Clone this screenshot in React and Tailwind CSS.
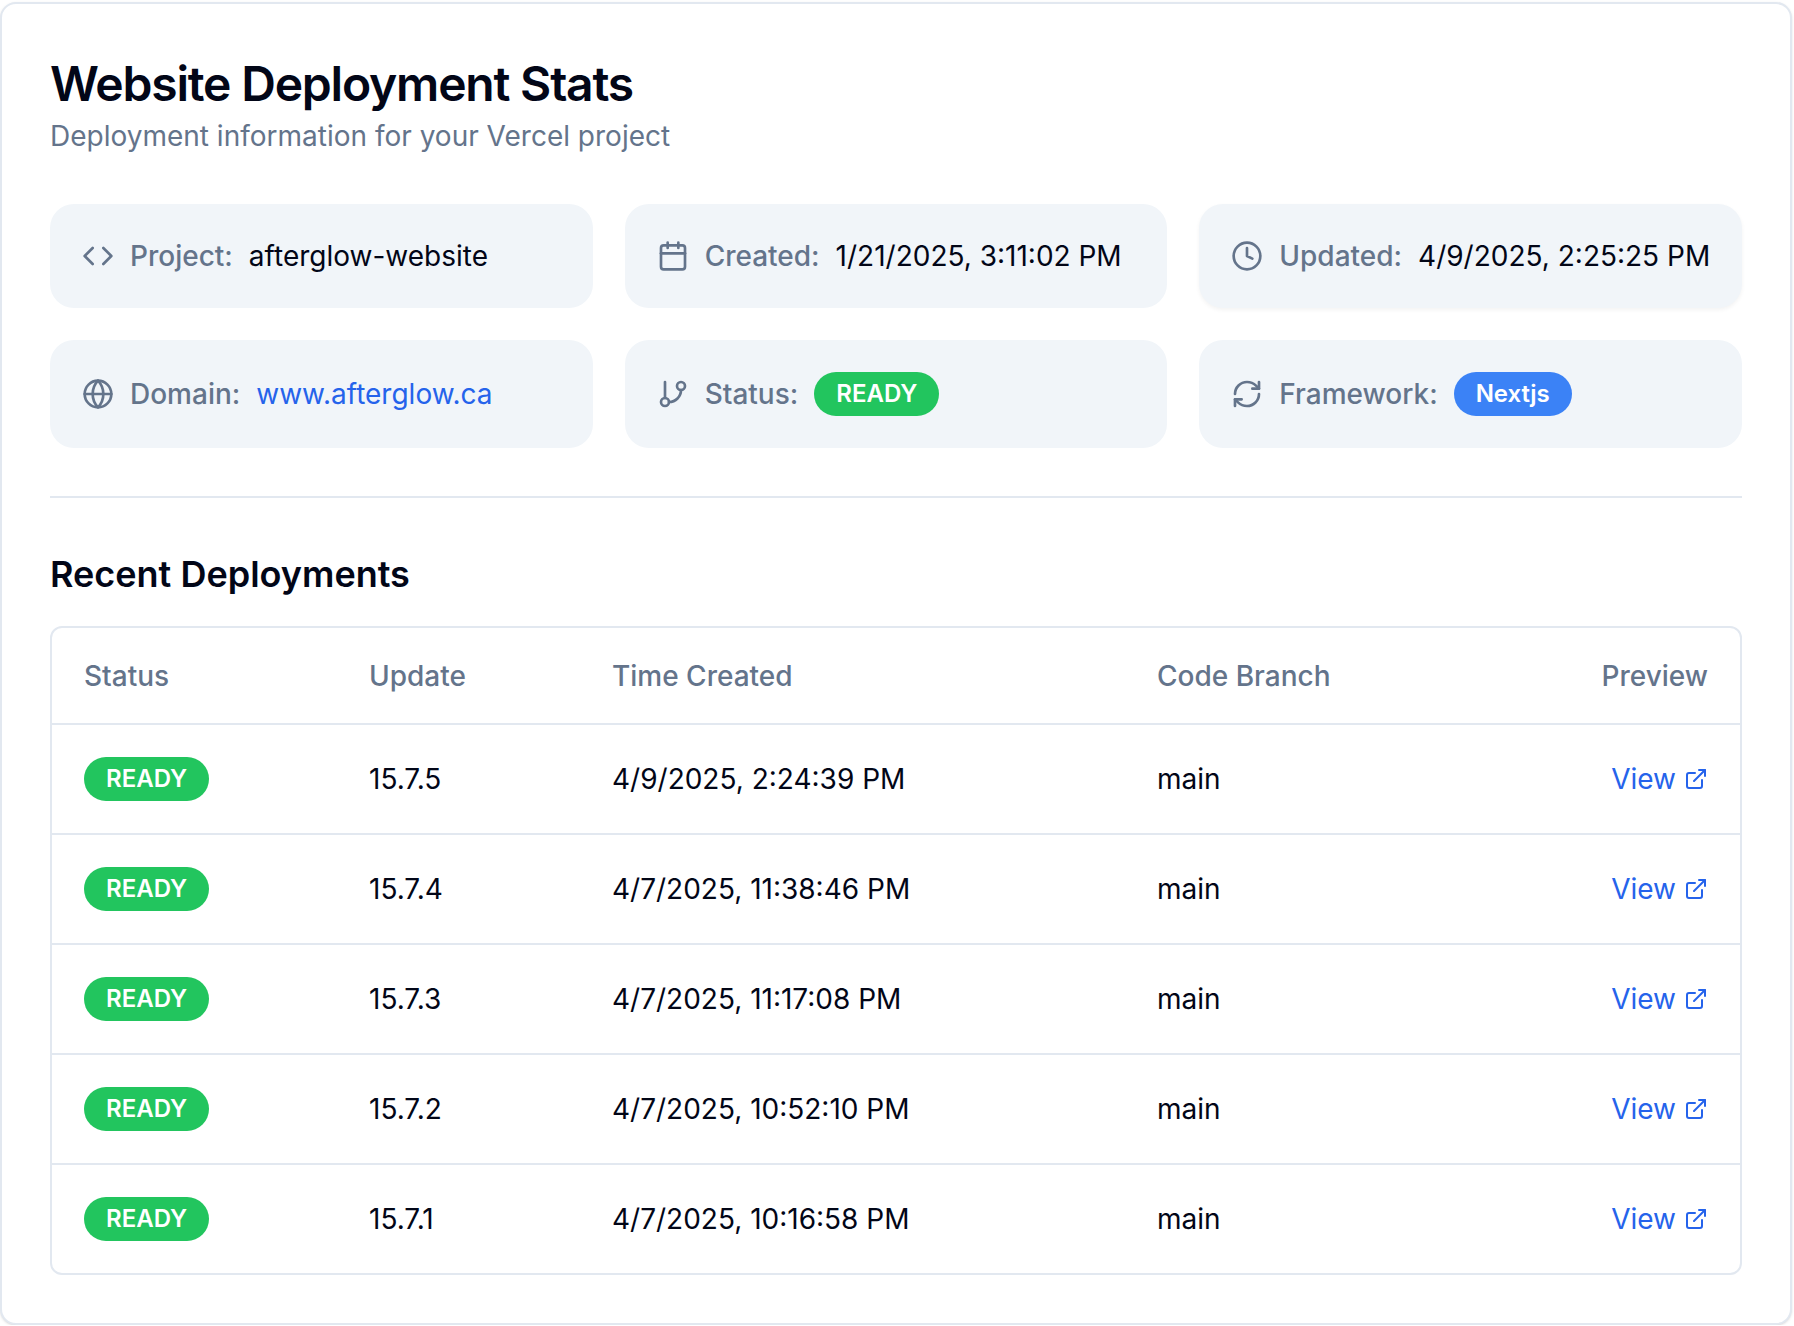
import React from "react";
import { Code, Calendar, Clock, Globe, GitBranch, RefreshCw, ExternalLink } from "lucide-react";

const font = { fontFamily: "Inter, 'Liberation Sans', sans-serif" };

function Badge({ color, children }) {
  return (
    <span className={`inline-flex items-center rounded-full border-2 border-transparent px-5 py-1 text-[24px] leading-[32px] font-semibold text-white ${color}`}>
      {children}
    </span>
  );
}

function Tile({ icon: Icon, label, children, extra = "" }) {
  return (
    <div className={`flex items-center gap-4 rounded-3xl bg-[#f1f5f9] p-8 whitespace-nowrap ${extra}`}>
      <Icon size={32} strokeWidth={2} className="text-[#64748b] shrink-0" />
      <span className="text-[28px] leading-[40px] font-medium text-[#64748b]">{label}</span>
      {children}
    </div>
  );
}

const Val = ({ children }) => <span className="text-[28px] leading-[40px] text-[#020617]">{children}</span>;

const rows = [
  ["15.7.5", "4/9/2025, 2:24:39 PM"],
  ["15.7.4", "4/7/2025, 11:38:46 PM"],
  ["15.7.3", "4/7/2025, 11:17:08 PM"],
  ["15.7.2", "4/7/2025, 10:52:10 PM"],
  ["15.7.1", "4/7/2025, 10:16:58 PM"],
];

export default function App() {
  return (
    <div style={font} className="pt-[2px] bg-white">
      <div className="w-[1792px] h-[1323px] rounded-2xl border-2 border-[#e2e8f0] bg-white shadow-sm">
        <div className="px-12 pt-12">
          <h1 className="text-[48px] leading-[64px] font-semibold tracking-tight text-[#020617]">Website Deployment Stats</h1>
          <p className="text-[28px] leading-[40px] text-[#64748b]">Deployment information for your Vercel project</p>
        </div>
        <div className="px-12 pt-12">
          <div className="grid grid-cols-3 gap-8">
            <Tile icon={Code} label="Project:"><Val>afterglow-website</Val></Tile>
            <Tile icon={Calendar} label="Created:"><Val>1/21/2025, 3:11:02 PM</Val></Tile>
            <Tile icon={Clock} label="Updated:" extra="shadow-[0_2px_4px_rgba(0,0,0,0.05)]"><Val>4/9/2025, 2:25:25 PM</Val></Tile>
            <Tile icon={Globe} label="Domain:"><span className="text-[28px] leading-[40px] text-[#2563eb]">www.afterglow.ca</span></Tile>
            <Tile icon={GitBranch} label="Status:"><Badge color="bg-[#22c55e]">READY</Badge></Tile>
            <Tile icon={RefreshCw} label="Framework:"><Badge color="bg-[#3b82f6]">Nextjs</Badge></Tile>
          </div>
          <div className="mt-12 h-[2px] bg-[#e2e8f0]" />
          <h2 className="mt-12 text-[36px] leading-[56px] font-semibold text-[#020617]">Recent Deployments</h2>
          <div className="mt-6 rounded-xl border-2 border-[#e2e8f0] overflow-hidden">
            <table className="w-full table-fixed text-[28px] leading-[40px]">
              <colgroup>
                <col className="w-[285px]" />
                <col className="w-[243px]" />
                <col className="w-[545px]" />
                <col />
              </colgroup>
              <thead>
                <tr className="h-[96px] border-b-2 border-[#e2e8f0]">
                  <th className="px-8 text-left font-medium text-[#64748b]">Status</th>
                  <th className="px-8 text-left font-medium text-[#64748b]">Update</th>
                  <th className="px-8 text-left font-medium text-[#64748b]">Time Created</th>
                  <th className="px-8 text-left font-medium text-[#64748b]">Code Branch</th>
                  <th className="px-8 text-right font-medium text-[#64748b]">Preview</th>
                </tr>
              </thead>
              <tbody>
                {rows.map(([v, t], i) => (
                  <tr key={v} className={i < rows.length - 1 ? "border-b-2 border-[#e2e8f0]" : ""}>
                    <td className="p-8"><Badge color="bg-[#22c55e]">READY</Badge></td>
                    <td className="p-8 text-[#020617]">{v}</td>
                    <td className="p-8 text-[#020617]">{t}</td>
                    <td className="p-8 text-[#020617]">main</td>
                    <td className="p-8 text-right">
                      <a className="inline-flex items-center gap-2 text-[#2563eb]">View <ExternalLink size={24} strokeWidth={2} /></a>
                    </td>
                  </tr>
                ))}
              </tbody>
            </table>
          </div>
        </div>
      </div>
    </div>
  );
}
